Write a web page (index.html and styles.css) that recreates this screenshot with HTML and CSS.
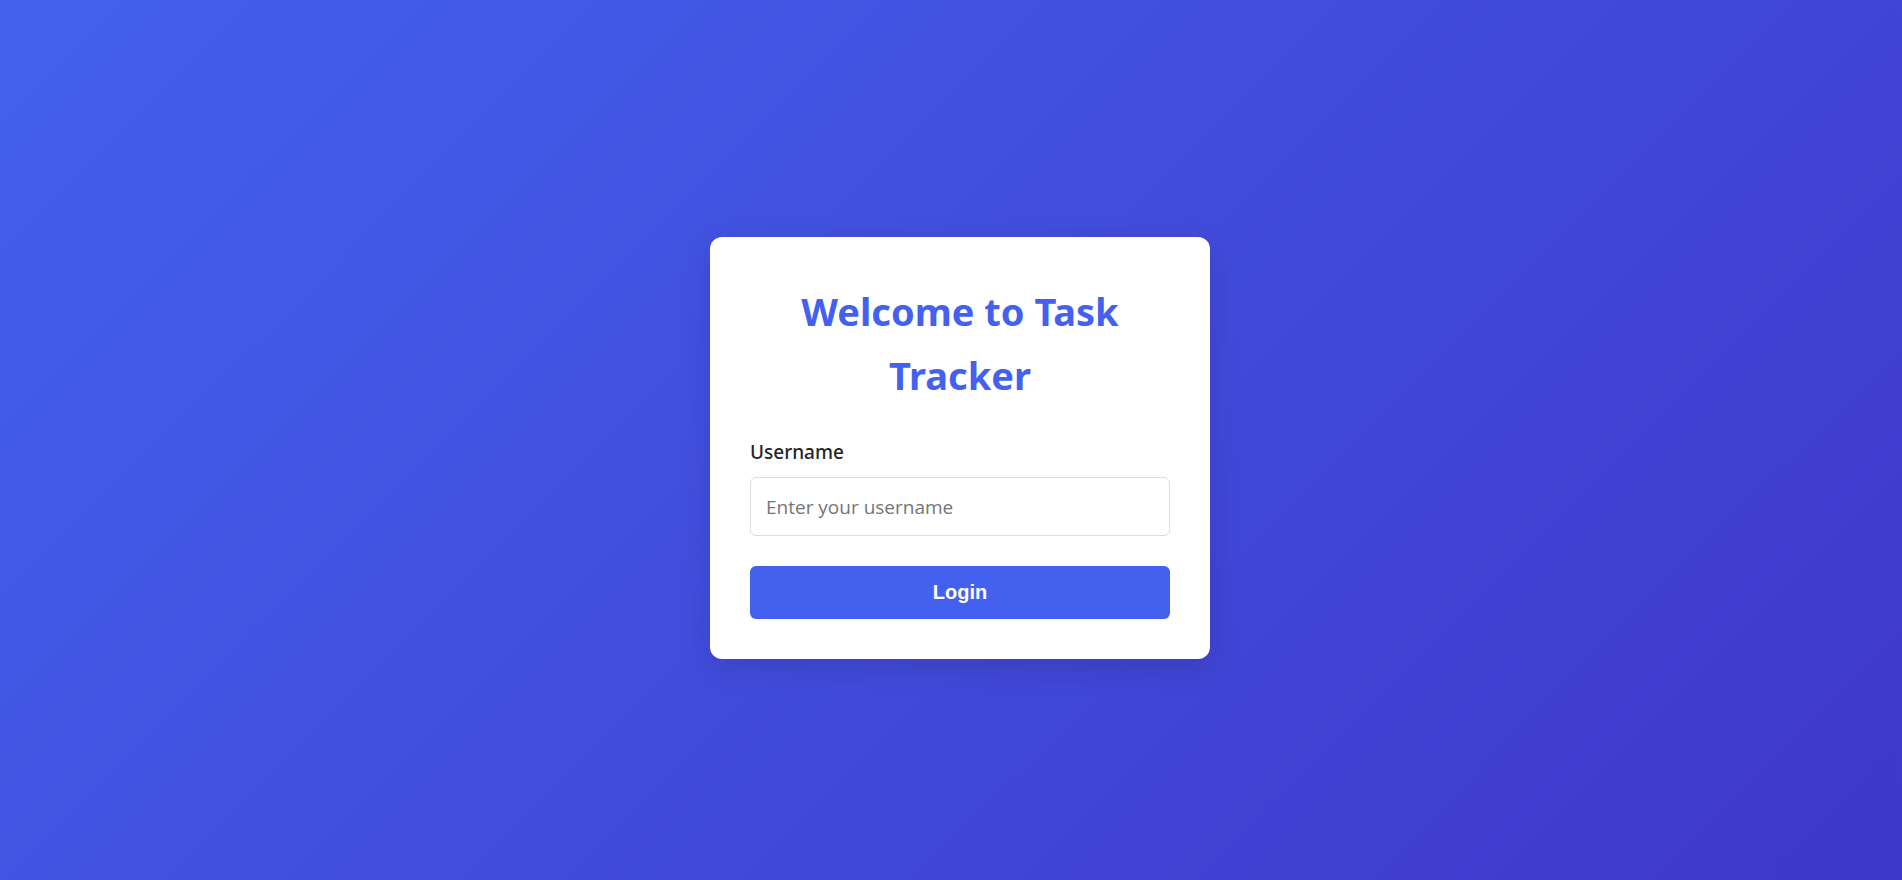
FILE: index.html
```html
<!DOCTYPE html>
<html lang="en">
<head>
<meta charset="utf-8">
<meta name="viewport" content="width=device-width, initial-scale=1">
<title>Task Tracker</title>
<link rel="stylesheet" href="styles.css">
</head>
<body>
<main class="login-page">
  <section class="login-card">
    <h1 class="login-title">Welcome to Task Tracker</h1>
    <form class="login-form">
      <div class="form-group">
        <label class="form-label" for="username">Username</label>
        <input class="form-input" id="username" type="text" placeholder="Enter your username">
      </div>
      <button class="login-button" type="submit">Login</button>
    </form>
  </section>
</main>
</body>
</html>
```

FILE: styles.css
```css
* {
  box-sizing: border-box;
  margin: 0;
  padding: 0;
}

body {
  font-family: "Noto Sans", sans-serif;
  font-size: 19px;
  line-height: 32px;
  color: #212529;
}

.login-page {
  display: flex;
  align-items: center;
  justify-content: center;
  min-height: 100vh;
  padding: 16px 0 0 18px;
  background: linear-gradient(135deg, #4361ee, #3f37c9);
}

.login-card {
  width: 100%;
  max-width: 500px;
  padding: 42px 40px 40px;
  background: #fff;
  border-radius: 12px;
  box-shadow: 0 8px 30px rgba(0, 0, 0, 0.12);
}

.login-title {
  margin-bottom: 29px;
  font-size: 38px;
  font-weight: 700;
  line-height: 64px;
  color: #4361ee;
  text-align: center;
}

.form-group {
  margin-bottom: 30px;
}

.form-label {
  display: block;
  margin-bottom: 9px;
  font-weight: 500;
}

.form-input {
  display: block;
  width: 100%;
  padding: 14px 15px 12px;
  font-family: "Open Sans", "Noto Sans", sans-serif;
  font-size: 19px;
  line-height: 31px;
  border: 1px solid #ddd;
  border-radius: 6px;
}

.form-input::placeholder {
  color: #757575;
}

.login-button {
  display: block;
  width: 100%;
  padding: 15px;
  font-family: "Liberation Sans", Arial, sans-serif;
  font-size: 20px;
  font-weight: 600;
  line-height: 23px;
  color: #fff;
  background: #4361ee;
  border: 0;
  border-radius: 6px;
  cursor: pointer;
}
```
